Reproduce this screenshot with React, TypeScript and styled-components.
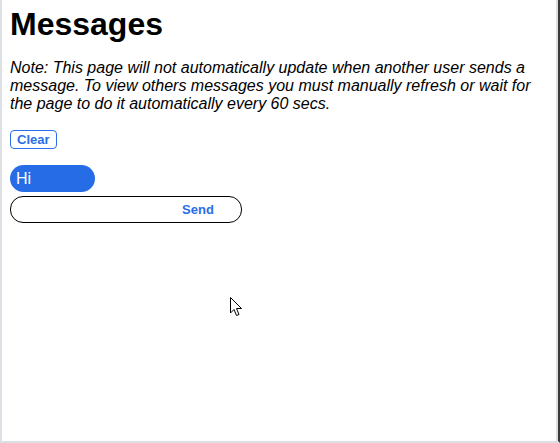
import React from "react";
import styled, { createGlobalStyle } from "styled-components";

const Global = createGlobalStyle`
  html, body { margin: 0; padding: 0; background: #fff; }
  body { font-family: "Liberation Sans", Arial, sans-serif; }
`;

const Frame = styled.div`
  position: relative;
  box-sizing: border-box;
  width: 560px;
  height: 443px;
  border-left: 2px solid #dcdfe3;
  border-bottom: 2px solid #dcdfe3;
  border-right: 2px solid #3a3a3a;
  box-shadow: inset -2px 0 0 #dcdfe3;
  padding: 0 8px;
  overflow: hidden;
`;

const Title = styled.h1`
  margin: 6px 0 0;
  font-size: 32px;
  line-height: 37px;
  font-weight: bold;
  color: #000;
`;

const Note = styled.p`
  margin: 16px 0 0;
  font-size: 16px;
  line-height: 18px;
  font-style: italic;
  color: #000;
`;

const ClearButton = styled.button`
  margin-top: 17px;
  display: block;
  box-sizing: border-box;
  height: 19px;
  padding: 0 6px;
  background: #fff;
  border: 1px solid #2a6ee8;
  border-radius: 4px;
  color: #2a6ee8;
  font-family: "Liberation Sans", Arial, sans-serif;
  font-weight: bold;
  font-size: 13px;
  line-height: 17px;
`;

const Messages = styled.div`
  margin-top: 16px;
  display: flex;
  flex-direction: column;
  align-items: flex-start;
  gap: 4px;
`;

const Bubble = styled.div`
  box-sizing: border-box;
  width: 85px;
  height: 27px;
  padding: 0 6px;
  background: #266ce6;
  border-radius: 14px;
  color: #fff;
  font-size: 16px;
  line-height: 27px;
`;

const Composer = styled.form`
  box-sizing: border-box;
  width: 232px;
  height: 27px;
  display: flex;
  align-items: center;
  border: 1px solid #000;
  border-radius: 13px;
  overflow: hidden;
`;

const Input = styled.input`
  flex: 1;
  min-width: 0;
  border: none;
  outline: none;
  background: transparent;
  height: 100%;
  padding: 0 10px;
`;

const SendButton = styled.button`
  width: 66px;
  margin-right: 10px;
  padding: 0;
  border: none;
  background: transparent;
  color: #2a6ee8;
  font-family: "Liberation Sans", Arial, sans-serif;
  font-weight: bold;
  font-size: 13px;
`;

const Cursor = styled.svg`
  position: absolute;
  left: 227px;
  top: 296px;
`;

export default function App() {
  return (
    <>
      <Global />
      <Frame>
        <Title>Messages</Title>
        <Note>
          Note: This page will not automatically update when another user sends a
          message. To view others messages you must manually refresh or wait for
          the page to do it automatically every 60 secs.
        </Note>
        <ClearButton type="button">Clear</ClearButton>
        <Messages>
          <Bubble>Hi</Bubble>
          <Composer onSubmit={(e) => e.preventDefault()}>
            <Input type="text" />
            <SendButton type="submit">Send</SendButton>
          </Composer>
        </Messages>
        <Cursor width="14" height="22" viewBox="0 0 14 22">
          <path d="M1.5 1.5 L1.5 17 L5 13.5 L7.5 19.5 L10 18.5 L7.5 12.5 L12.5 12.5 Z" fill="#fff" stroke="#000" strokeWidth="1" strokeLinejoin="round" />
        </Cursor>
      </Frame>
    </>
  );
}
